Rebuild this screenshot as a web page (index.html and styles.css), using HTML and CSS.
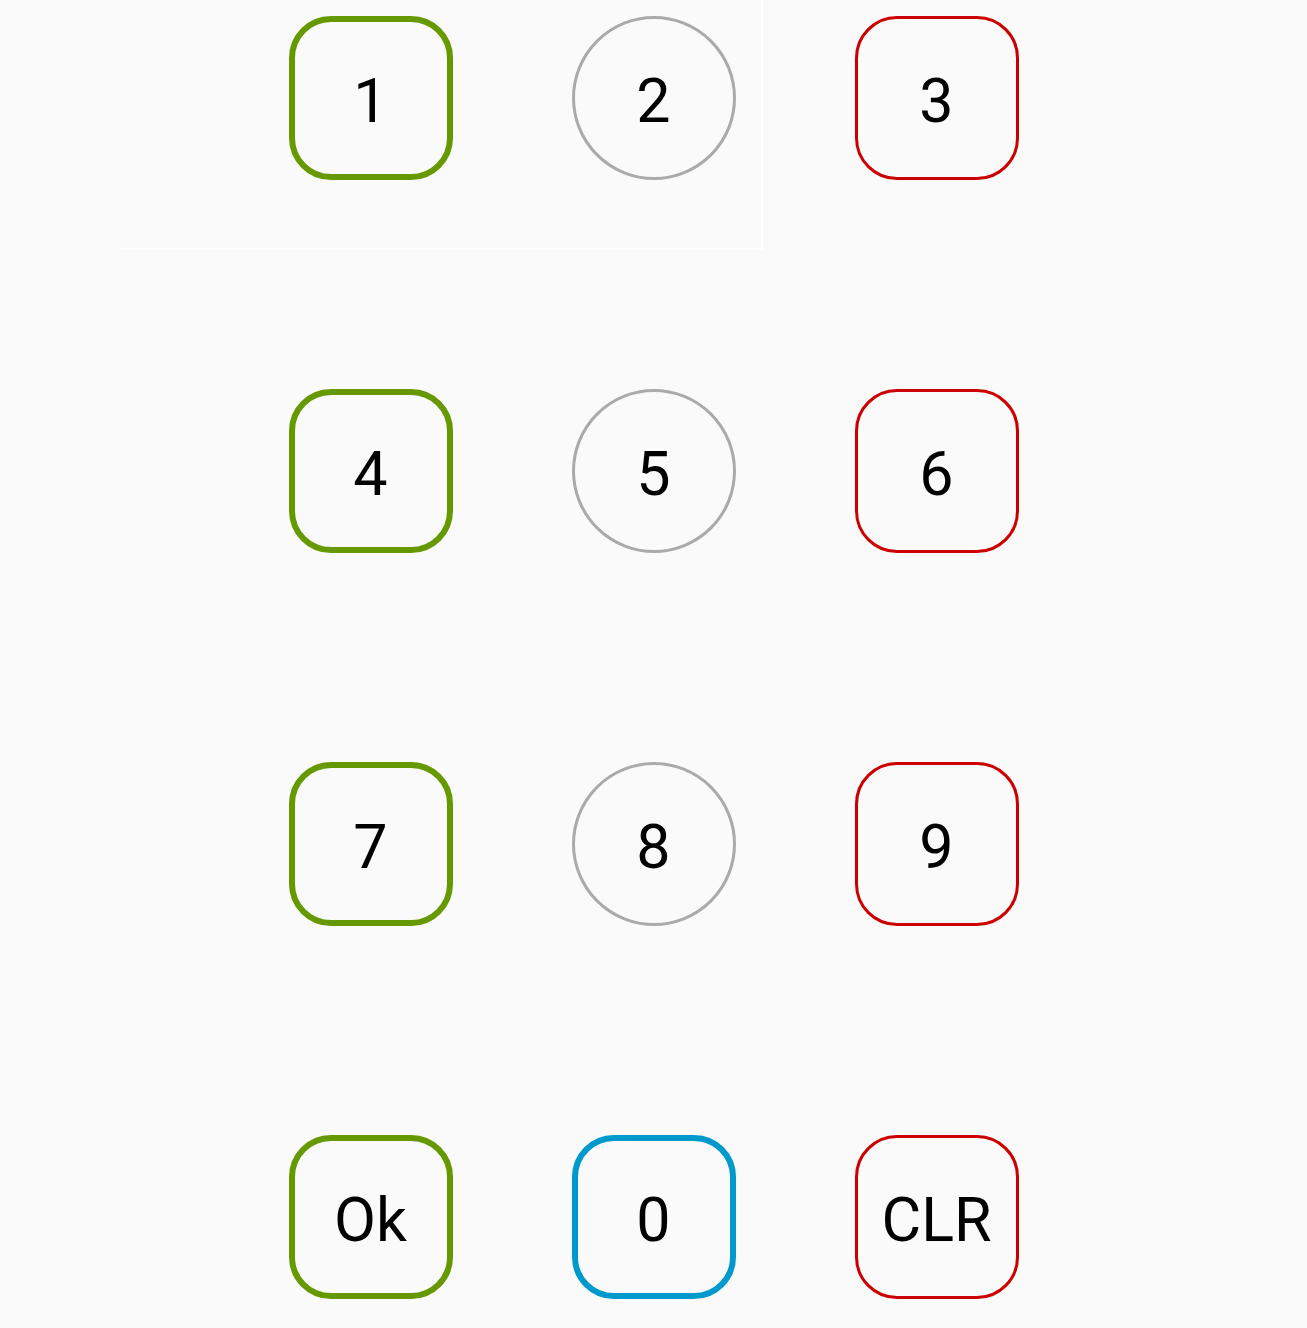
FILE: index.html
```html
<!DOCTYPE html>
<html>
<head>
<meta charset="utf-8">
<link rel="stylesheet" href="styles.css">
</head>
<body>
<div class="ghost"></div>
<div class="pad">
  <div class="key sq green">1</div>
  <div class="key circle">2</div>
  <div class="key sq red">3</div>
  <div class="key sq green">4</div>
  <div class="key circle">5</div>
  <div class="key sq red">6</div>
  <div class="key sq green">7</div>
  <div class="key circle">8</div>
  <div class="key sq red">9</div>
  <div class="key sq green">Ok</div>
  <div class="key sq blue">0</div>
  <div class="key sq red">CLR</div>
</div>
</body>
</html>
```
FILE: styles.css
```css
html, body {
  margin: 0;
  padding: 0;
  background: #fafafa;
  width: 1307px;
  height: 1328px;
  overflow: hidden;
  font-family: Roboto, "Liberation Sans", sans-serif;
}
.ghost {
  position: absolute;
  left: 119px;
  top: -2px;
  width: 642px;
  height: 250px;
  border-right: 2px solid #ffffff;
  border-bottom: 2px solid #ffffff;
}
.pad {
  position: relative;
  display: grid;
  grid-template-columns: repeat(3, 283px);
  grid-auto-rows: 164px;
  row-gap: 209px;
  justify-content: center;
  justify-items: center;
  padding-top: 16px;
}
.key {
  box-sizing: border-box;
  width: 164px;
  height: 164px;
  display: flex;
  align-items: center;
  justify-content: center;
  font-size: 61px;
  color: #000;
  padding-top: 5px;
}
.sq { border-radius: 42px; }
.circle {
  border-radius: 50%;
  border: 3px solid #aaaaaa;
}
.green { border: 6px solid #669900; }
.red { border: 3px solid #cc0000; }
.blue { border: 6px solid #0099cc; }
```
